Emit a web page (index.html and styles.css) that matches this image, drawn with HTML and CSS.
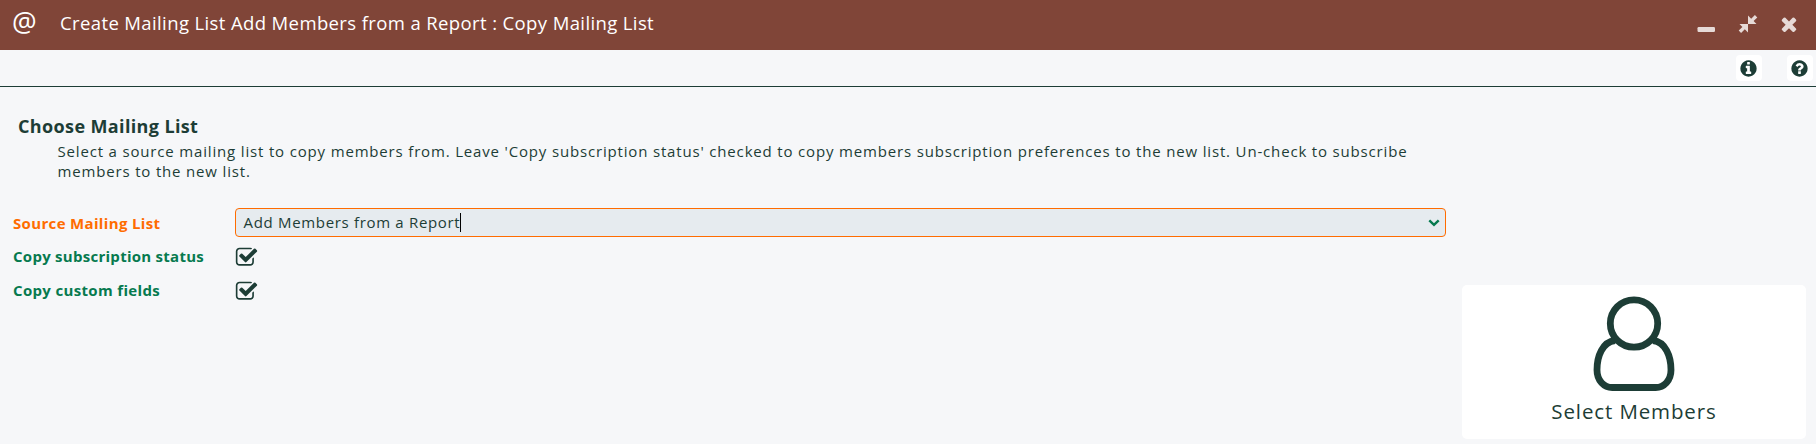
FILE: index.html
```
<!DOCTYPE html>
<html lang="en">
<head>
    <meta charset="UTF-8">
    <meta name="viewport" content="width=device-width, initial-scale=1.0">
    <title>Copy Mailing List</title>
    <link rel="stylesheet" href="styles.css">
</head>
<body>

    <div class="titlebar">
        <span class="at">@</span>
        <h1>Create Mailing List Add Members from a Report : Copy Mailing List</h1>
        <div class="window-buttons">
            <svg class="win-icon" viewBox="0 0 22 22"><rect x="2.5" y="14" width="17.5" height="5" rx="1.2"/></svg>
            <svg class="win-icon" viewBox="0 0 22 22"><path d="M11 2.500v8.500h8.500l-2.900-2.900 3.700-3.700-2.400-2.400-3.700 3.700zM11 19.500v-8.500h-8.500l2.900 2.900-3.700 3.700 2.400 2.400 3.700-3.700z"/></svg>
            <svg class="win-icon" viewBox="0 0 1792 1792"><path d="M1490 1322q0 40-28 68l-136 136q-28 28-68 28t-68-28l-294-294-294 294q-28 28-68 28t-68-28l-136-136q-28-28-28-68t28-68l294-294-294-294q-28-28-28-68t28-68l136-136q28-28 68-28t68 28l294 294 294-294q28-28 68-28t68 28l136 136q28 28 28 68t-28 68l-294 294 294 294q28 28 28 68z"/></svg>
        </div>
    </div>

    <div class="toolbar">
        <button class="tool">
            <svg viewBox="0 0 1792 1792"><path d="M1152 1376v-160q0-14-9-23t-23-9h-96v-512q0-14-9-23t-23-9h-320q-14 0-23 9t-9 23v160q0 14 9 23t23 9h96v320h-96q-14 0-23 9t-9 23v160q0 14 9 23t23 9h448q14 0 23-9t9-23zm-128-896v-160q0-14-9-23t-23-9h-192q-14 0-23 9t-9 23v160q0 14 9 23t23 9h192q14 0 23-9t9-23zm640 416q0 209-103 385.5t-279.5 279.5-385.5 103-385.5-103-279.5-279.5-103-385.5 103-385.5 279.5-279.5 385.5-103 385.5 103 279.5 279.5 103 385.5z"/></svg>
        </button>
        <button class="tool">
            <svg viewBox="0 0 1792 1792"><path d="M1024 1376v-192q0-14-9-23t-23-9h-192q-14 0-23 9t-9 23v192q0 14 9 23t23 9h192q14 0 23-9t9-23zm256-672q0-88-55.5-163t-138.5-116-170-41q-243 0-371 213-15 24 8 42l132 100q7 6 19 6 16 0 25-12 53-68 86-92 34-24 86-24 48 0 85.5 26t37.5 59q0 38-20 61t-68 45q-63 28-115.5 86.5t-52.5 125.5v36q0 14 9 23t23 9h192q14 0 23-9t9-23q0-19 21.5-49.5t54.5-49.5q32-18 49-28.5t46-35 44.5-48 28-60.5 12.5-81zm384 192q0 209-103 385.5t-279.5 279.5-385.5 103-385.5-103-279.5-279.5-103-385.5 103-385.5 279.5-279.5 385.5-103 385.5 103 279.5 279.5 103 385.5z"/></svg>
        </button>
    </div>

    <div class="content">

        <div class="form">
            <h2>Choose Mailing List</h2>
            <p class="help">
                <span class="line">Select a source mailing list to copy members from. Leave 'Copy subscription status' checked to copy members subscription preferences to the new list. Un-check to subscribe</span>
                <span class="line">members to the new list.</span>
            </p>

            <div class="row row-source">
                <span class="label active">Source Mailing List</span>
                <div class="select">
                    <span class="value">Add Members from a Report</span>
                    <svg class="chevron" viewBox="0 0 12 8"><path d="M1.300 1.300L6 5.800l4.700-4.500"/></svg>
                </div>
            </div>

            <div class="row">
                <span class="label status">Copy subscription status</span>
                <svg class="check" viewBox="0 0 1792 1792"><path d="M1472 930v318q0 119-84.5 203.5t-203.5 84.5h-832q-119 0-203.5-84.5t-84.5-203.5v-832q0-119 84.5-203.5t203.5-84.5h832q63 0 117 25 15 7 18 23 3 17-9 29l-49 49q-10 10-23 10-3 0-9-2-23-6-45-6h-832q-66 0-113 47t-47 113v832q0 66 47 113t113 47h832q66 0 113-47t47-113v-254q0-13 9-22l64-64q10-10 23-10 6 0 12 3 20 8 20 29zm231-489l-814 814q-24 24-57 24t-57-24l-430-430q-24-24-24-57t24-57l110-110q24-24 57-24t57 24l263 263 647-647q24-24 57-24t57 24l110 110q24 24 24 57t-24 57z"/></svg>
            </div>

            <div class="row">
                <span class="label">Copy custom fields</span>
                <svg class="check" viewBox="0 0 1792 1792"><path d="M1472 930v318q0 119-84.5 203.5t-203.5 84.5h-832q-119 0-203.5-84.5t-84.5-203.5v-832q0-119 84.5-203.5t203.5-84.5h832q63 0 117 25 15 7 18 23 3 17-9 29l-49 49q-10 10-23 10-3 0-9-2-23-6-45-6h-832q-66 0-113 47t-47 113v832q0 66 47 113t113 47h832q66 0 113-47t47-113v-254q0-13 9-22l64-64q10-10 23-10 6 0 12 3 20 8 20 29zm231-489l-814 814q-24 24-57 24t-57-24l-430-430q-24-24-24-57t24-57l110-110q24-24 57-24t57 24l263 263 647-647q24-24 57-24t57 24l110 110q24 24 24 57t-24 57z"/></svg>
            </div>
        </div>

        <button class="select-members">
            <svg class="user" viewBox="0 0 82 96"><circle cx="41" cy="27.500" r="23.700"/><path d="M22 44.500C9.500 46 4 60 4 74c0 10.500 7 17.500 15.300 17.500h43.400c8.300 0 15.300-7 15.300-17.500 0-14-5.500-28-18-29.500"/></svg>
            <span>Select Members</span>
        </button>

    </div>

</body>
</html>
```

FILE: styles.css
```
*{
    box-sizing: border-box;
}

body{
    margin: 0;
    height: 444px;
    overflow: hidden;
    background-color: #f6f7f9;
    color: #1d3d36;
    font-family: "Open Sans", "Noto Sans", sans-serif;
    font-size: 15px;
}

h1, h2, p{
    margin: 0;
}

button{
    border: 0;
    padding: 0;
    font: inherit;
    color: inherit;
}

svg{
    display: block;
    flex: none;
    fill: currentColor;
}

.titlebar{
    display: flex;
    align-items: center;
    height: 50px;
    padding: 0 16px 0 12px;
    background-color: #804538;
    color: white;
}

.at{
    width: 48px;
    height: 50px;
    font-size: 27.5px;
    font-weight: 500;
    line-height: 44px;
}

.titlebar h1{
    height: 50px;
    font-size: 18.5px;
    font-weight: 400;
    letter-spacing: .38px;
    line-height: 46px;
    white-space: nowrap;
}

.window-buttons{
    display: flex;
    gap: 19.5px;
    margin-left: auto;
    margin-bottom: 2px;
    color: #e6dad7;
}

.win-icon{
    width: 22px;
    height: 22px;
}

.toolbar{
    display: flex;
    justify-content: flex-end;
    gap: 25px;
    height: 37px;
    padding: 5px 3px 0 0;
    border-bottom: 1px solid #1d3d36;
}

.tool{
    display: flex;
    align-items: center;
    justify-content: center;
    width: 26px;
    height: 26px;
    padding-right: 1px;
    border-radius: 4px;
    background-color: white;
}

.tool svg{
    width: 19px;
    height: 19px;
}

.content{
    display: flex;
    justify-content: space-between;
    height: 357px;
    padding: 25px 10px 5px 13px;
}

.form{
    width: 1433px;
}

.form h2{
    padding-left: 5px;
    font-size: 18px;
    font-weight: 700;
    letter-spacing: .37px;
    line-height: 28px;
}

.help{
    margin-bottom: 27px;
    padding-top: 1px;
    padding-left: 44.5px;
    letter-spacing: .832px;
    line-height: 20px;
}

.line{
    display: block;
    white-space: nowrap;
}

.row{
    display: flex;
    align-items: center;
    height: 34px;
}

.row-source{
    height: 29px;
    margin-bottom: 3px;
}

.label{
    width: 222px;
    padding-bottom: 2px;
    color: #067a4f;
    font-weight: 700;
    letter-spacing: .34px;
    white-space: nowrap;
}

.status{
    letter-spacing: .27px;
}

.active{
    padding-bottom: 0;
    color: #ff6c00;
}

.select{
    display: flex;
    align-items: center;
    justify-content: space-between;
    flex: 1;
    height: 29px;
    padding: 0 5px 0 7.5px;
    border: 1px solid #ff6c00;
    border-radius: 4px;
    background-color: #e6ebef;
}

.value{
    height: 19px;
    border-right: 1px solid black;
    letter-spacing: .68px;
    line-height: 18px;
    white-space: nowrap;
}

.chevron{
    width: 12px;
    height: 8px;
    fill: none;
    stroke: #067a4f;
    stroke-width: 2.4;
}

.check{
    width: 23px;
    height: 23px;
}

.select-members{
    display: flex;
    flex-direction: column;
    align-items: center;
    align-self: flex-end;
    width: 344px;
    height: 154px;
    padding-top: 11px;
    border-radius: 5px;
    background-color: white;
    font-size: 20.5px;
    letter-spacing: .88px;
}

.user{
    width: 82px;
    height: 96px;
    fill: none;
    stroke: currentColor;
    stroke-width: 6.8;
}

.select-members span{
    line-height: 38px;
}
```
